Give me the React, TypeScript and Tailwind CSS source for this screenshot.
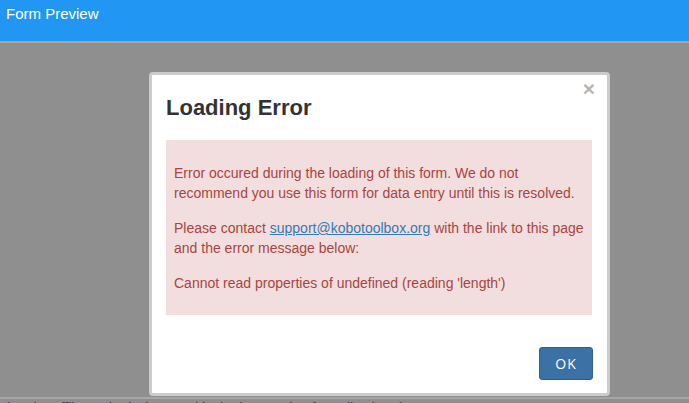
export default function App() {
  return (
    <div className="w-[689px] h-[403px] overflow-hidden bg-[#8f8f8f] flex flex-col font-['Liberation_Sans',Arial,sans-serif]">
      <div className="h-[41px] shrink-0 bg-[#2196f3] pl-[6px] pt-[5px] text-[15px] leading-[18px] text-white">
        Form Preview
      </div>
      <div className="h-px shrink-0 bg-[#63b3f5]" />
      <div className="h-px shrink-0 bg-[#a9a9a9]" />

      <div className="shrink-0 pt-[29px] pl-[149px]">
        <div className="w-[461px] rounded-[4px] border-[3px] border-[#cccccc] bg-white flex flex-col pb-[13px]">
          <div className="relative px-[14px] pt-[20px]">
            <h1 className="text-[22px] leading-[26px] font-bold text-[#333333]">Loading Error</h1>
            <button className="absolute right-[12px] top-[3px] text-[21px] leading-[21px] font-bold text-[#b5b5b5]">
              ×
            </button>
          </div>

          <div className="ml-[14px] mt-[19px] w-[426px] bg-[#f2dede] px-[8px] pt-[23px] pb-[22px] text-[14px] leading-[20px] text-[#a94442]">
            <p className="mb-[15px]">
              Error occured during the loading of this form. We do not recommend you use this form for data entry
              until this is resolved.
            </p>
            <p className="mb-[15px]">
              Please contact{' '}
              <a href="#" className="text-[#337ab7] underline">
                support@kobotoolbox.org
              </a>{' '}
              with the link to this page and the error message below:
            </p>
            <p>Cannot read properties of undefined (reading 'length')</p>
          </div>

          <div className="flex justify-end pr-[14px] mt-[32px]">
            <button className="w-[54px] h-[33px] rounded-[3px] border border-[#2e5f8e] bg-[#3b71a5] text-white text-[14px] tracking-[1px] font-['Open_Sans',sans-serif]">
              OK
            </button>
          </div>
        </div>
      </div>

      <div className="h-[2px] shrink-0 mt-[1px] bg-[#a6a6a6]" />
      <div className="mt-[2px] w-[417px] overflow-hidden whitespace-nowrap text-[14px] leading-[14px] text-[#2a2e38]">
        ving the offline submissions and is the best option for collecting data in the field.
      </div>
    </div>
  );
}
